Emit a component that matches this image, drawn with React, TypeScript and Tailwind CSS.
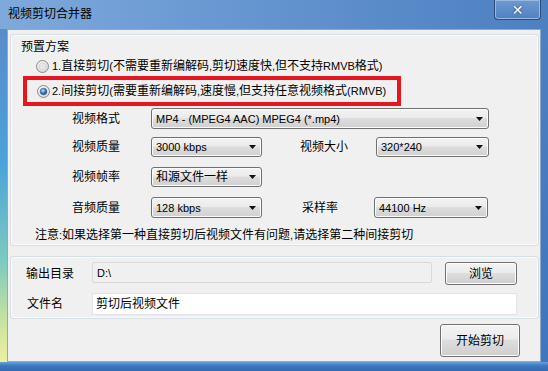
import React from "react";

const F = "font-['Liberation_Sans','Noto_Sans_CJK_SC',sans-serif]";

function T({ text }: { text: string }) {
  const parts = text.split(/([\x20-\x7e]+)/).filter((p) => p.length > 0);
  return (
    <>
      {parts.map((p, i) =>
        /^[\x20-\x7e]+$/.test(p) ? (
          <span key={i} className="text-[11px]">
            {p}
          </span>
        ) : (
          <span key={i}>{p}</span>
        )
      )}
    </>
  );
}

function Radio({ checked, id }: { checked?: boolean; id: string }) {
  return (
    <svg width="13" height="13" viewBox="0 0 13 13" className="shrink-0">
      <defs>
        <radialGradient id={`f${id}`} cx="0.4" cy="0.35" r="0.75">
          <stop offset="0" stopColor="#ffffff" />
          <stop offset="1" stopColor="#d2d2d2" />
        </radialGradient>
        <radialGradient id={`d${id}`} cx="0.4" cy="0.35" r="0.7">
          <stop offset="0" stopColor="#c4e6ff" />
          <stop offset="0.5" stopColor="#3f86d0" />
          <stop offset="1" stopColor="#163c74" />
        </radialGradient>
      </defs>
      <circle cx="6.5" cy="6.5" r="6" fill={`url(#f${id})`} stroke="#8a8a8a" />
      {checked ? (
        <circle cx="6.5" cy="6.5" r="3.3" fill={`url(#d${id})`} stroke="#2a4f86" strokeWidth="0.6" />
      ) : (
        <circle cx="6.5" cy="6.5" r="3.6" fill="#e6e6e6" stroke="#cfcfcf" strokeWidth="0.7" />
      )}
    </svg>
  );
}

function Arrow() {
  return (
    <svg width="7" height="4" viewBox="0 0 7 4" className="shrink-0">
      <polygon points="0,0 7,0 3.5,4" fill="#111" />
    </svg>
  );
}

function Combo({ className, text }: { className: string; text: string }) {
  return (
    <div
      className={`flex items-center justify-between rounded-[3px] border border-[#707070] bg-[linear-gradient(to_bottom,#f3f3f3,#ebebeb_45%,#dddddd_50%,#d0d0d0)] pl-[4px] pr-[5px] shadow-[inset_0_0_0_1px_#fbfbfb] ${className}`}
    >
      <span className="text-[12px] leading-4 text-black whitespace-nowrap">
        <T text={text} />
      </span>
      <Arrow />
    </div>
  );
}

function Label({ className, text }: { className: string; text: string }) {
  return (
    <span className={`text-[12px] leading-4 text-black whitespace-nowrap shrink-0 ${className}`}>
      <T text={text} />
    </span>
  );
}

function Button({ className, text }: { className: string; text: string }) {
  return (
    <div
      className={`flex items-center justify-center rounded-[3px] border border-[#707070] bg-[linear-gradient(to_bottom,#f3f3f3,#ebebeb_45%,#dddddd_50%,#cfcfcf)] shadow-[inset_0_0_0_1px_#fcfcfc] text-[12px] leading-4 text-black ${className}`}
    >
      {text}
    </div>
  );
}

export default function App() {
  return (
    <div className={`w-[548px] h-[371px] overflow-hidden flex flex-col bg-[#4a80c2] ${F}`}>
      {/* Title bar */}
      <div className="h-[29px] shrink-0 flex items-start justify-between bg-[linear-gradient(to_right,#7ea9db,#6b9ad3_35%,#5a8bc9_70%,#4d80c1)]">
        <span className="pl-[8px] pt-[6px] text-[12px] leading-4 text-black">视频剪切合并器</span>
        <div className="mr-[7px] w-[47px] h-[20px] rounded-b-[4px] border border-t-0 border-[#2c4d7a] shadow-[inset_0_0_0_1px_#9ab9e0] bg-[linear-gradient(to_bottom,#6f9ad0,#4f80c0)] flex items-center justify-center">
          <span className="text-white text-[14px] font-bold leading-none font-['DejaVu_Sans',sans-serif] [text-shadow:0_0_2px_#1d3556]">✕</span>
        </div>
      </div>

      {/* Middle */}
      <div className="flex flex-1">
        <div className="w-[7px] bg-[linear-gradient(to_bottom,#5b8bc9,#4aa3d8_40%,#7ccbc0_70%,#c9e3a0_88%,#eef0a0)]" />
        <div className="w-[534px] h-[333px] border border-[#8fa8c8] bg-[#f0f0f0] flex flex-col">
          {/* Panel 1 */}
          <div className="mt-[4px] ml-[2px] mr-[1px] h-[212px] rounded-[3px] border border-[#d5dfe5] shadow-[inset_0_0_0_1px_#fbfbfb] flex flex-col">
            <Label className="mt-[4px] ml-[10px]" text="预置方案" />
            <div className="mt-[3px] ml-[25px] h-[16px] flex items-center gap-[3px]">
              <Radio id="r1" />
              <span className="text-[12px] leading-4 text-black whitespace-nowrap">
                <T text="1.直接剪切(不需要重新编解码,剪切速度快,但不支持RMVB格式)" />
              </span>
            </div>
            <div className="mt-[2px] ml-[12px] w-[378px] h-[30px] border-[4px] border-[#e5161f] flex items-center pl-[10px] gap-[2px]">
              <Radio id="r2" checked />
              <span className="text-[12px] leading-4 text-black whitespace-nowrap">
                <T text="2.间接剪切(需要重新编解码,速度慢,但支持任意视频格式(RMVB)" />
              </span>
            </div>
            <div className="mt-[2px] ml-[61px] h-[21px] flex items-center">
              <Label className="w-[79px]" text="视频格式" />
              <Combo className="w-[338px] h-[21px]" text="MP4 - (MPEG4 AAC) MPEG4 (*.mp4)" />
            </div>
            <div className="mt-[8px] ml-[61px] h-[20px] flex items-center">
              <Label className="w-[79px]" text="视频质量" />
              <Combo className="w-[111px] h-[20px]" text="3000 kbps" />
              <Label className="ml-[38px] w-[76px]" text="视频大小" />
              <Combo className="w-[113px] h-[20px]" text="320*240" />
            </div>
            <div className="mt-[10px] ml-[61px] h-[20px] flex items-center">
              <Label className="w-[79px]" text="视频帧率" />
              <Combo className="w-[111px] h-[20px]" text="和源文件一样" />
            </div>
            <div className="mt-[10px] ml-[61px] h-[21px] flex items-center">
              <Label className="w-[79px]" text="音频质量" />
              <Combo className="w-[111px] h-[21px]" text="128 kbps" />
              <Label className="ml-[40px] w-[72px]" text="采样率" />
              <Combo className="w-[114px] h-[21px]" text="44100 Hz" />
            </div>
            <Label className="mt-[9px] ml-[24px]" text="注意:如果选择第一种直接剪切后视频文件有问题,请选择第二种间接剪切" />
          </div>

          {/* Panel 2 */}
          <div className="mt-[10px] ml-[2px] mr-[1px] h-[63px] rounded-[3px] border border-[#d5dfe5] shadow-[inset_0_0_0_1px_#fbfbfb] flex flex-col">
            <div className="mt-[5px] ml-[15px] h-[23px] flex items-center">
              <Label className="w-[66px]" text="输出目录" />
              <div className="w-[340px] h-[21px] self-start rounded-[2px] border border-[#d9d9d9] bg-[#f0f0f0] flex items-center pl-[4px]">
                <span className="text-[12px] leading-4 text-black">
                  <T text="D:\" />
                </span>
              </div>
              <Button className="ml-[13px] w-[72px] h-[23px]" text="浏览" />
            </div>
            <div className="mt-[8px] ml-[16px] h-[22px] flex items-center">
              <Label className="w-[65px]" text="文件名" />
              <div className="w-[425px] h-[22px] border border-[#e2e3ea] bg-white flex items-center pl-[3px]">
                <span className="text-[12px] leading-4 text-black">剪切后视频文件</span>
              </div>
            </div>
          </div>

          <Button className="mt-[5px] mr-[20px] self-end w-[80px] h-[33px]" text="开始剪切" />
        </div>
        <div className="w-[7px] bg-[linear-gradient(to_bottom,#4d80c1,#3f76bd)]" />
      </div>

      {/* Bottom frame */}
      <div className="h-[9px] shrink-0 bg-[linear-gradient(to_bottom,#6aa0da,#3d78c2_40%,#3469b0)]" />
    </div>
  );
}
